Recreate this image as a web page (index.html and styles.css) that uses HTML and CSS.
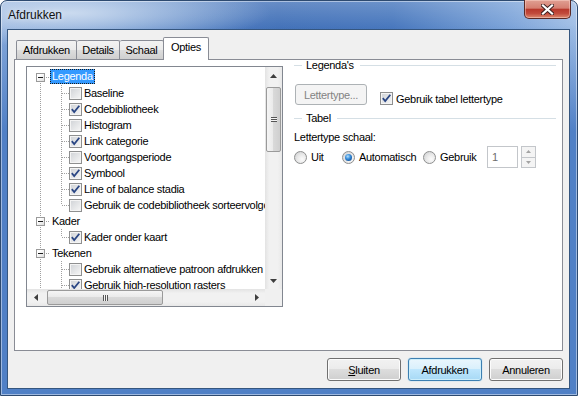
FILE: index.html
```html
<!DOCTYPE html>
<html lang="nl">
<head>
    <meta charset="UTF-8">
    <title>Afdrukken</title>
    <link rel="stylesheet" href="styles.css">
</head>
<body>
<div class="window">
    <div class="titlebar">
        <span class="title">Afdrukken</span>
        <div class="close">
            <svg width="13" height="11" viewBox="0 0 13 11">
                <path d="M2 1.5 L11 9.5 M11 1.5 L2 9.5" stroke="#3a1f1f" stroke-width="4" stroke-linecap="square"/>
                <path d="M2 1.5 L11 9.5 M11 1.5 L2 9.5" stroke="#fff" stroke-width="2.2" stroke-linecap="square"/>
            </svg>
        </div>
    </div>

    <div class="client">
        <div class="tabs">
            <div class="tab t1">Afdrukken</div>
            <div class="tab t2">Details</div>
            <div class="tab t3">Schaal</div>
            <div class="tab active">Opties</div>
        </div>

        <div class="panel">
            <div class="tree">
                <div class="tree-items">
                    <div class="node"><span class="twisty"></span><span class="label selected">Legenda</span></div>
                    <div class="children">
                        <div class="leaf"><span class="check"></span><span class="label">Baseline</span></div>
                        <div class="leaf"><span class="check"><svg width="11" height="11" viewBox="0 0 11 11"><path d="M1.8 5.2 L4.2 8 L9.3 1.8" fill="none" stroke="#2a4684" stroke-width="1.8"/></svg></span><span class="label">Codebibliotheek</span></div>
                        <div class="leaf"><span class="check"></span><span class="label">Histogram</span></div>
                        <div class="leaf"><span class="check"><svg width="11" height="11" viewBox="0 0 11 11"><path d="M1.8 5.2 L4.2 8 L9.3 1.8" fill="none" stroke="#2a4684" stroke-width="1.8"/></svg></span><span class="label">Link categorie</span></div>
                        <div class="leaf"><span class="check"></span><span class="label">Voortgangsperiode</span></div>
                        <div class="leaf"><span class="check"><svg width="11" height="11" viewBox="0 0 11 11"><path d="M1.8 5.2 L4.2 8 L9.3 1.8" fill="none" stroke="#2a4684" stroke-width="1.8"/></svg></span><span class="label">Symbool</span></div>
                        <div class="leaf"><span class="check"><svg width="11" height="11" viewBox="0 0 11 11"><path d="M1.8 5.2 L4.2 8 L9.3 1.8" fill="none" stroke="#2a4684" stroke-width="1.8"/></svg></span><span class="label">Line of balance stadia</span></div>
                        <div class="leaf"><span class="check"></span><span class="label">Gebruik de codebibliotheek sorteervolgorde</span></div>
                    </div>
                    <div class="node"><span class="twisty"></span><span class="label">Kader</span></div>
                    <div class="children">
                        <div class="leaf"><span class="check"><svg width="11" height="11" viewBox="0 0 11 11"><path d="M1.8 5.2 L4.2 8 L9.3 1.8" fill="none" stroke="#2a4684" stroke-width="1.8"/></svg></span><span class="label">Kader onder kaart</span></div>
                    </div>
                    <div class="node"><span class="twisty"></span><span class="label">Tekenen</span></div>
                    <div class="children open">
                        <div class="leaf"><span class="check"></span><span class="label">Gebruik alternatieve patroon afdrukken</span></div>
                        <div class="leaf"><span class="check"><svg width="11" height="11" viewBox="0 0 11 11"><path d="M1.8 5.2 L4.2 8 L9.3 1.8" fill="none" stroke="#2a4684" stroke-width="1.8"/></svg></span><span class="label">Gebruik high-resolution rasters</span></div>
                    </div>
                </div>

                <div class="vscroll">
                    <div class="sbtn"><svg width="7" height="4" viewBox="0 0 7 4"><path d="M0 4 H7 L3.5 0 Z" fill="#3e3e3e"/></svg></div>
                    <div class="vthumb"><span class="grip-h"></span></div>
                    <div class="space"></div>
                    <div class="sbtn"><svg width="7" height="4" viewBox="0 0 7 4"><path d="M0 0 H7 L3.5 4 Z" fill="#3e3e3e"/></svg></div>
                </div>

                <div class="hscroll">
                    <div class="sbtn"><svg width="4" height="7" viewBox="0 0 4 7"><path d="M4 0 V7 L0 3.5 Z" fill="#3e3e3e"/></svg></div>
                    <div class="hthumb"><span class="grip-v"></span></div>
                    <div class="space"></div>
                    <div class="sbtn"><svg width="4" height="7" viewBox="0 0 4 7"><path d="M0 0 V7 L4 3.5 Z" fill="#3e3e3e"/></svg></div>
                </div>
                <div class="corner"></div>
            </div>

            <div class="options">
                <div class="group-head"><span>Legenda's</span></div>

                <div class="font-row">
                    <div class="btn disabled font-btn">Lettertype...</div>
                    <div class="checkline">
                        <span class="check"><svg width="11" height="11" viewBox="0 0 11 11"><path d="M1.8 5.2 L4.2 8 L9.3 1.8" fill="none" stroke="#2a4684" stroke-width="1.8"/></svg></span>
                        <span>Gebruik tabel lettertype</span>
                    </div>
                </div>

                <div class="group-head tabel"><span>Tabel</span></div>

                <div class="scale-label">Lettertype schaal:</div>

                <div class="radio-row">
                    <div class="radio-item r-uit"><span class="radio"></span>Uit</div>
                    <div class="radio-item r-auto"><span class="radio on"></span>Automatisch</div>
                    <div class="radio-item r-gebruik"><span class="radio"></span>Gebruik</div>
                    <div class="edit">1</div>
                    <div class="spin">
                        <div class="spin-btn"><svg width="5" height="3" viewBox="0 0 5 3"><path d="M0 3 H5 L2.5 0 Z" fill="#a3a3a3"/></svg></div>
                        <div class="spin-btn"><svg width="5" height="3" viewBox="0 0 5 3"><path d="M0 0 H5 L2.5 3 Z" fill="#a3a3a3"/></svg></div>
                    </div>
                </div>
            </div>
        </div>

        <div class="buttons">
            <div class="btn"><u>S</u>luiten</div>
            <div class="btn default">Afdrukken</div>
            <div class="btn">Annuleren</div>
        </div>
    </div>
</div>
</body>
</html>
```

FILE: styles.css
```css
*{
    margin: 0;
    padding: 0;
    box-sizing: border-box;
}
body{
    font-family: "Liberation Sans", Arial, sans-serif;
    font-size: 11px;
    letter-spacing: -0.3px;
    color: #000;
    background: #fff;
}

/* window frame */
.window{
    width: 578px;
    height: 396px;
    display: flex;
    flex-direction: column;
    padding: 0 7px 6px 6px;
    border: 1px solid #2d4a70;
    border-radius: 7px 7px 0 0;
    background:
        radial-gradient(ellipse 200px 34px at 70px 12px, rgba(206,221,240,.95), rgba(206,221,240,0)),
        linear-gradient(to bottom, rgba(80,128,198,0) 24px, rgba(80,128,198,1) 130px),
        linear-gradient(to bottom, rgba(255,255,255,.2), rgba(255,255,255,0) 28px),
        linear-gradient(to right, #86a9da 0%, #5c89c9 22%, #4271b8 48%, #4777bd 68%, #7aa2d8 88%, #a1bfe6 100%);
    box-shadow: inset 0 0 0 1px rgba(255,255,255,.45);
}
.titlebar{
    height: 28px;
    display: flex;
    align-items: center;
    padding-left: 1px;
}
.title{
    font-size: 12px;
    letter-spacing: 0;
    color: #111;
    text-shadow: 0 0 6px rgba(255,255,255,.9);
}
.close{
    margin-left: auto;
    margin-right: -1px;
    margin-top: -1px;
    align-self: flex-start;
    width: 47px;
    height: 19px;
    display: flex;
    align-items: center;
    justify-content: center;
    border: 1px solid #5a2a26;
    border-top: none;
    border-radius: 0 0 5px 5px;
    background: linear-gradient(to bottom, #e0a093 0%, #d57f71 45%, #b8392c 52%, #c24b3c 75%, #dc8a70 100%);
    box-shadow: inset 0 0 0 1px rgba(255,220,210,.45);
}

.client{
    flex: 1;
    border: 1px solid #35567f;
    background: #f0f0f0;
    display: flex;
    flex-direction: column;
}

/* tabs */
.tabs{
    height: 22px;
    margin: 7px 0 0 8px;
    display: flex;
    align-items: flex-end;
}
.tab{
    height: 19px;
    line-height: 18px;
    text-align: center;
    border: 1px solid #898c95;
    border-bottom: none;
    border-radius: 2px 2px 0 0;
    background: linear-gradient(to bottom, #f2f2f2 0%, #ebebeb 50%, #dddddd 50%, #cfcfcf 100%);
}
.t1{ width: 61px; }
.t2{ width: 43px; border-left: none; }
.t3{ width: 44px; border-left: none; }
.tab.active{
    position: relative;
    width: 46px;
    height: 23px;
    line-height: 19px;
    margin-left: -1px;
    margin-bottom: -1px;
    background: #fff;
}

.panel{
    width: 549px;
    height: 292px;
    margin-left: 6px;
    border: 1px solid #898c95;
    background: #fff;
    display: flex;
    align-items: flex-start;
}

/* tree view */
.tree{
    width: 257px;
    height: 241px;
    margin: 6px 0 0 11px;
    border: 1px solid #828790;
    display: grid;
    grid-template-columns: 1fr 17px;
    grid-template-rows: 1fr 17px;
}
.tree-items{
    min-height: 0;
    overflow: hidden;
    padding-top: 2px;
    white-space: nowrap;
    background: repeating-linear-gradient(to bottom, #a0a0a0 0 1px, transparent 1px 2px) 13px 10px / 1px 100% no-repeat;
}
.node{
    height: 16px;
    display: flex;
    align-items: flex-start;
    padding-left: 9px;
    background: repeating-linear-gradient(to right, #a0a0a0 0 1px, transparent 1px 2px) 19px 8px / 4px 1px no-repeat;
}
.twisty{
    width: 9px;
    height: 9px;
    margin: 4px 4px 0 0;
    border: 1px solid #9a9a9a;
    background: linear-gradient(135deg, #fff 30%, #dcdcdc);
    position: relative;
}
.twisty::after{
    content: "";
    position: absolute;
    left: 1px;
    top: 3px;
    width: 5px;
    height: 1px;
    background: #1d1d1d;
}
.label{
    height: 16px;
    line-height: 16px;
    padding: 0 2px;
}
.node .label{
    margin-left: 1px;
}
.label.selected{
    height: 15px;
    line-height: 13px;
    padding: 0 1px;
    background: #3399ff;
    color: #fff;
    border: 1px dotted #1b1b1b;
}
.children{
    background: repeating-linear-gradient(to bottom, #a0a0a0 0 1px, transparent 1px 2px) 34px 0 / 1px calc(100% - 8px) no-repeat;
}
.children.open{
    background-size: 1px 100%;
}
.leaf{
    height: 16px;
    display: flex;
    align-items: center;
    padding-left: 42px;
    background: repeating-linear-gradient(to right, #a0a0a0 0 1px, transparent 1px 2px) 35px 8px / 7px 1px no-repeat;
}
.check{
    width: 13px;
    height: 13px;
    flex: none;
    border: 1px solid #8e8f8f;
    background: linear-gradient(135deg, #cfd2d6, #f7f7f7);
    box-shadow: inset 0 0 0 1px #f4f4f4;
    display: flex;
    align-items: center;
    justify-content: center;
}

/* scrollbars */
.vscroll{
    grid-column: 2;
    grid-row: 1;
    display: flex;
    flex-direction: column;
    align-items: center;
    background: linear-gradient(to right, #e3e3e3, #f1f1f1 25%, #f1f1f1 75%, #e8e8e8);
}
.hscroll{
    grid-column: 1;
    grid-row: 2;
    display: flex;
    align-items: center;
    background: linear-gradient(to bottom, #e3e3e3, #f1f1f1 25%, #f1f1f1 75%, #e8e8e8);
}
.corner{
    grid-column: 2;
    grid-row: 2;
    background: #f0f0f0;
}
.sbtn{
    width: 17px;
    height: 17px;
    flex: none;
    display: flex;
    align-items: center;
    justify-content: center;
}
.space{
    flex: 1;
}
.vthumb{
    width: 15px;
    height: 65px;
    margin-top: 3px;
    border: 1px solid #9a9a9a;
    border-radius: 2px;
    background: linear-gradient(to right, #f5f5f5, #e9e9e9 50%, #d9d9d9 50%, #cfcfcf);
    display: flex;
    align-items: center;
    justify-content: center;
}
.hthumb{
    width: 116px;
    height: 15px;
    margin-left: 3px;
    border: 1px solid #9a9a9a;
    border-radius: 2px;
    background: linear-gradient(to bottom, #f5f5f5, #e9e9e9 50%, #d9d9d9 50%, #cfcfcf);
    display: flex;
    align-items: center;
    justify-content: center;
}
.grip-h{
    width: 6px;
    height: 5px;
    background: repeating-linear-gradient(to bottom, #555 0 1px, #f4f4f4 1px 2px);
}
.grip-v{
    width: 5px;
    height: 6px;
    background: repeating-linear-gradient(to right, #555 0 1px, #f4f4f4 1px 2px);
}

/* options on the right */
.options{
    width: 263px;
    margin: -1px 0 0 10px;
}
.group-head{
    height: 13px;
    line-height: 13px;
    display: flex;
    align-items: center;
}
.group-head::before{
    content: "";
    width: 8px;
    height: 1px;
    margin-left: 1px;
    background: #d5dfe5;
}
.group-head span{
    margin: 0 6px 0 4px;
}
.group-head::after{
    content: "";
    flex: 1;
    height: 1px;
    background: #d5dfe5;
}
.font-row{
    display: flex;
    margin-top: 12px;
}
.btn{
    width: 74px;
    height: 23px;
    display: flex;
    align-items: center;
    justify-content: center;
    border: 1px solid #707070;
    border-radius: 3px;
    background: linear-gradient(to bottom, #f2f2f2 0%, #ebebeb 50%, #dddddd 50%, #cfcfcf 100%);
    box-shadow: inset 0 0 0 1px #fcfcfc;
}
.btn.disabled{
    color: #838383;
    border-color: #adb2b5;
    background: #f4f4f4;
    box-shadow: none;
}
.font-btn{
    width: 72px;
    height: 21px;
    margin-left: 2px;
}
.checkline{
    display: flex;
    align-items: center;
    gap: 3px;
    margin: 8px 0 0 13px;
    height: 13px;
}
.group-head.tabel{
    margin-top: 7px;
}
.scale-label{
    height: 13px;
    line-height: 13px;
    margin: 6px 0 0 1px;
}
.radio-row{
    display: flex;
    align-items: center;
    height: 22px;
    margin-top: 2px;
}
.radio-item{
    display: flex;
    align-items: center;
    gap: 4px;
}
.r-uit{ width: 48px; margin-left: 1px; }
.r-auto{ width: 81px; }
.r-gebruik{ width: 64px; }
.radio{
    width: 13px;
    height: 13px;
    border: 1px solid #8e8f8f;
    border-radius: 50%;
    background: radial-gradient(circle at 65% 65%, #fbfbfb 0, #e9e9e9 45%, #c9cbcd 100%);
    display: flex;
    align-items: center;
    justify-content: center;
}
.radio.on::after{
    content: "";
    width: 7px;
    height: 7px;
    border-radius: 50%;
    background: radial-gradient(circle at 40% 35%, #b6e1fb 0, #3a8fdc 40%, #0d4a91 85%);
}
.edit{
    width: 31px;
    height: 22px;
    padding-left: 4px;
    line-height: 20px;
    color: #6d6d6d;
    border: 1px solid #c3c6ca;
    background: #fff;
}
.spin{
    width: 15px;
    height: 22px;
    margin-left: 3px;
    display: flex;
    flex-direction: column;
}
.spin-btn{
    flex: 1;
    display: flex;
    align-items: center;
    justify-content: center;
    border: 1px solid #c3c6ca;
    background: #f4f4f4;
}
.spin-btn + .spin-btn{
    border-top: none;
}

/* bottom buttons */
.buttons{
    display: flex;
    justify-content: flex-end;
    gap: 7px;
    margin-top: 7px;
    padding-right: 6px;
}
.btn.default{
    border-color: #3c7fb1;
    background: linear-gradient(to bottom, #eaf6fd 0%, #d9f0fc 50%, #bee6fd 50%, #a7d9f5 100%);
    box-shadow: inset 0 0 0 1px #cdeefb, 0 0 1px #48b1ea;
}
```
